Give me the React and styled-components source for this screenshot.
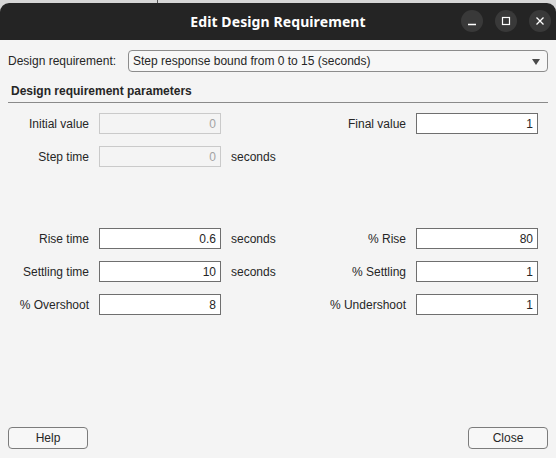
import styled, { createGlobalStyle } from 'styled-components';

const GlobalStyle = createGlobalStyle`
  html, body {
    margin: 0;
    padding: 0;
    background: #d6d6d6;
  }
  body {
    font-family: "Liberation Sans", Arial, sans-serif;
  }
`;

const Desktop = styled.div`
  width: 556px;
  height: 458px;
  padding-top: 3px;
  box-sizing: border-box;
  position: relative;
  overflow: hidden;
`;

const DesktopEdge = styled.div`
  position: absolute;
  left: 157px;
  top: 0;
  width: 1px;
  height: 3px;
  background: #555;
`;

const Window = styled.div`
  height: 455px;
  display: flex;
  flex-direction: column;
  border-radius: 9px 9px 0 0;
  overflow: hidden;
  background: #f4f4f4;
`;

const TitleBar = styled.div`
  height: 37px;
  flex: none;
  background: #242424;
  display: flex;
  align-items: center;
  justify-content: center;
  position: relative;
`;

const Title = styled.div`
  color: #ffffff;
  font-family: "Noto Sans", "DejaVu Sans", sans-serif;
  font-weight: 700;
  font-size: 14px;
  letter-spacing: 0.1px;
`;

const Controls = styled.div`
  position: absolute;
  right: 5px;
  top: 7px;
  display: flex;
  gap: 12px;
`;

const CtrlButton = styled.div`
  width: 22px;
  height: 22px;
  border-radius: 50%;
  background: #393939;
  display: flex;
  align-items: center;
  justify-content: center;
`;

const Body = styled.div`
  flex: 1;
  display: flex;
  flex-direction: column;
  padding: 10px 8px 6px 8px;
  font-size: 12px;
  color: #262626;
`;

const TopRow = styled.div`
  display: flex;
  align-items: center;
  height: 22px;
`;

const TopLabel = styled.span`
  width: 120px;
  flex: none;
`;

const Select = styled.div`
  flex: 1;
  height: 22px;
  box-sizing: border-box;
  border: 1px solid #8c8c8c;
  border-radius: 4px;
  background: #f7f7f7;
  display: flex;
  align-items: center;
  justify-content: space-between;
  padding: 0 7px 0 4px;
`;

const Arrow = styled.span`
  width: 0;
  height: 0;
  border-left: 4px solid transparent;
  border-right: 4px solid transparent;
  border-top: 6px solid #4a4a4a;
  margin-top: 1px;
`;

const SectionTitle = styled.div`
  margin-top: 12px;
  padding: 0 0 4px 3px;
  font-weight: 700;
  border-bottom: 1px solid #8a8a8a;
`;

const Grid = styled.div`
  display: grid;
  grid-template-columns: 81px 122px 175px 122px;
  column-gap: 10px;
  row-gap: 12px;
  align-items: center;
  margin-top: ${p => p.$top}px;
`;

const Label = styled.span`
  text-align: right;
  white-space: nowrap;
`;

const Middle = styled.div`
  display: flex;
  justify-content: space-between;
  align-items: center;
`;

const Field = styled.div`
  height: 21px;
  box-sizing: border-box;
  border: 1px solid ${p => (p.$disabled ? '#cacaca' : '#6f6f6f')};
  background: ${p => (p.$disabled ? '#f4f4f4' : '#ffffff')};
  color: ${p => (p.$disabled ? '#a3a3a3' : '#262626')};
  display: flex;
  align-items: center;
  justify-content: flex-end;
  padding-right: 4px;
`;

const Footer = styled.div`
  margin-top: auto;
  margin-bottom: 3px;
  display: flex;
  justify-content: space-between;
`;

const Button = styled.div`
  width: 80px;
  height: 22px;
  box-sizing: border-box;
  border: 1px solid #7c7c7c;
  border-radius: 4px;
  background: #f7f7f7;
  display: flex;
  align-items: center;
  justify-content: center;
`;

const rowsTop = [
  { l: 'Initial value', v: '0', dis: true, unit: '', rl: 'Final value', rv: '1' },
  { l: 'Step time', v: '0', dis: true, unit: 'seconds', rl: '', rv: null },
];

const rowsBottom = [
  { l: 'Rise time', v: '0.6', unit: 'seconds', rl: '% Rise', rv: '80' },
  { l: 'Settling time', v: '10', unit: 'seconds', rl: '% Settling', rv: '1' },
  { l: '% Overshoot', v: '8', unit: '', rl: '% Undershoot', rv: '1' },
];

const Rows = ({ rows, top }) => (
  <Grid $top={top}>
    {rows.map(r => [
      <Label key={r.l + 'l'}>{r.l}</Label>,
      <Field key={r.l + 'v'} $disabled={r.dis}>{r.v}</Field>,
      <Middle key={r.l + 'm'}>
        <span>{r.unit}</span>
        <span>{r.rl}</span>
      </Middle>,
      r.rv !== null ? <Field key={r.l + 'r'}>{r.rv}</Field> : <span key={r.l + 'r'} />,
    ])}
  </Grid>
);

export default function App() {
  return (
    <>
      <GlobalStyle />
      <Desktop>
        <DesktopEdge />
        <Window>
          <TitleBar>
            <Title>Edit Design Requirement</Title>
            <Controls>
              <CtrlButton>
                <svg width="10" height="10" viewBox="0 0 10 10">
                  <path d="M1 8.5h8" stroke="#fff" strokeWidth="1.3" />
                </svg>
              </CtrlButton>
              <CtrlButton>
                <svg width="10" height="10" viewBox="0 0 10 10">
                  <rect x="1.5" y="1.5" width="7" height="7" fill="none" stroke="#fff" strokeWidth="1.2" />
                </svg>
              </CtrlButton>
              <CtrlButton>
                <svg width="10" height="10" viewBox="0 0 10 10">
                  <path d="M1.5 1.5l7 7M8.5 1.5l-7 7" stroke="#fff" strokeWidth="1.3" />
                </svg>
              </CtrlButton>
            </Controls>
          </TitleBar>
          <Body>
            <TopRow>
              <TopLabel>Design requirement:</TopLabel>
              <Select>
                <span>Step response bound from 0 to 15 (seconds)</span>
                <Arrow />
              </Select>
            </TopRow>
            <SectionTitle>Design requirement parameters</SectionTitle>
            <Rows rows={rowsTop} top={10} />
            <Rows rows={rowsBottom} top={61} />
            <Footer>
              <Button>Help</Button>
              <Button>Close</Button>
            </Footer>
          </Body>
        </Window>
      </Desktop>
    </>
  );
}
